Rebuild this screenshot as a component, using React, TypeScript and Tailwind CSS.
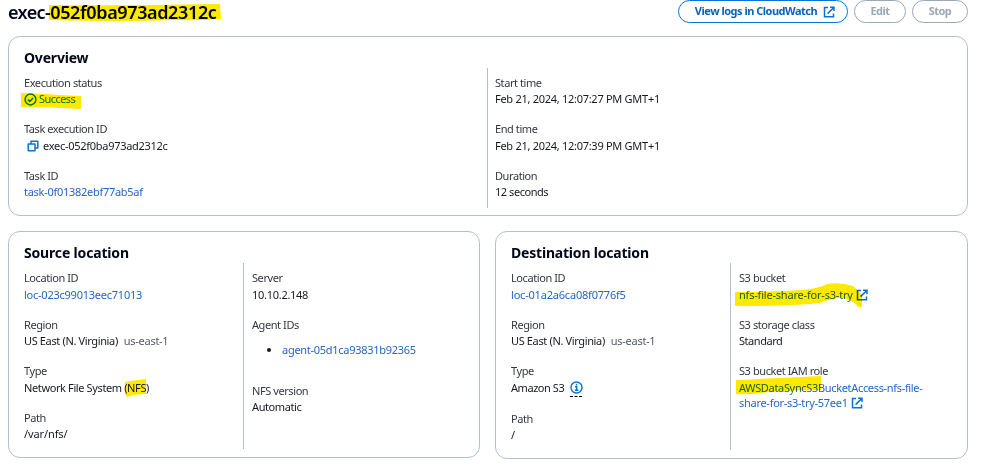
import type { ReactNode } from "react";

function ExternalIcon({ className = "" }: { className?: string }) {
  return (
    <svg viewBox="0 0 12 12" className={`h-3 w-3 shrink-0 ${className}`} fill="none" stroke="#0972d3" strokeWidth="1.5">
      <path d="M5 1.5H1.5V10.8H10.5V7.5" />
      <path d="M7 1.2H11V5M11 1.2L4.6 7.6" />
    </svg>
  );
}

function CopyIcon() {
  return (
    <svg viewBox="0 0 12 12" className="h-3 w-3 shrink-0" fill="none" stroke="#0972d3" strokeWidth="1.5" strokeLinejoin="round">
      <path d="M1.2 4H8V10.8H1.2Z" />
      <path d="M4 4V1.2H10.8V8H8" />
    </svg>
  );
}

function SuccessIcon() {
  return (
    <svg viewBox="0 0 13 13" className="h-[13px] w-[13px] shrink-0" fill="none" stroke="#037f0c" strokeWidth="1.5">
      <circle cx="6.5" cy="6.5" r="5.4" />
      <path d="M3.8 6.6L5.8 8.4L9 4.9" />
    </svg>
  );
}

function InfoIcon() {
  return (
    <svg viewBox="0 0 13 13" className="h-[13px] w-[13px] shrink-0" fill="none" stroke="#0972d3" strokeWidth="1.4">
      <circle cx="6.5" cy="6.5" r="5.5" />
      <path d="M5 5.8H6.7V9.2M4.8 9.2H8.4" />
      <path d="M5.8 3.8H7.3" strokeWidth="1.5" />
    </svg>
  );
}

function Field({ label, children, className = "" }: { label: string; children: ReactNode; className?: string }) {
  return (
    <div className={`leading-[16.5px] ${className}`}>
      <div className="tracking-[-0.42px] text-[#33383f]">{label}</div>
      <div className="flex items-center whitespace-nowrap">{children}</div>
    </div>
  );
}

function Mark({ d, className }: { d: string; className: string }) {
  return (
    <svg className={`pointer-events-none absolute overflow-visible mix-blend-multiply ${className}`} fill="#ffe900">
      <path d={d} />
    </svg>
  );
}

function Region() {
  return (
    <>
      <span className="tracking-[-0.36px]">US East (N. Virginia)</span>
      <span className="ml-1.5 text-[#545b66]">us-east-1</span>
    </>
  );
}

export default function App() {
  return (
    <div className="h-[472px] w-[987px] overflow-hidden bg-white pl-2 font-['Noto_Sans',sans-serif] text-[11px] tracking-[-0.28px] text-[#16191f]">
      <header className="flex h-9 w-[960px] items-start justify-between">
        <h1 className="relative text-[18px] leading-6 font-semibold tracking-[-0.37px] text-[#000716]">
          <span className="tracking-[-0.6px]">exec-</span>052f0ba973ad2312c
          <Mark className="top-0 left-10 h-6 w-44" d="M1 5Q60 6 172 4L173 19Q150 21 125 20Q70 22 1 20Z" />
        </h1>
        <div className="flex gap-1.5 font-bold tracking-[-0.5px]">
          <button className="flex h-[23px] w-[170px] items-center justify-center gap-1.5 rounded-full border border-[#0972d3] pl-1 text-[#0b61bd]">
            <span>View logs in CloudWatch</span>
            <ExternalIcon />
          </button>
          <button className="h-[23px] w-[52px] rounded-full border border-[#9ba7b6] text-[#9ba7b6]">Edit</button>
          <button className="h-[23px] w-14 rounded-full border border-[#9ba7b6] text-[#9ba7b6]">Stop</button>
        </div>
      </header>

      <section className="h-[180px] w-[960px] rounded-xl border border-[#b6bec9] px-[15px] pt-[11px]">
        <h2 className="h-5 text-sm leading-5 font-bold tracking-[-0.2px] text-[#000716]">Overview</h2>
        <div className="flex">
          <div className="flex w-[463px] flex-col gap-[13.5px] pt-[6.75px]">
            <Field label="Execution status">
              <span className="relative flex items-center gap-0.5 tracking-[-0.55px] text-[#037f0c]">
                <SuccessIcon />
                Success
                <Mark className="-top-px left-0 h-5 w-16" d="M-3 3Q25 4 35 5L57 6V19Q30 17 -3 17Z" />
              </span>
            </Field>
            <Field label="Task execution ID">
              <span className="flex items-center gap-1 pl-[3px]">
                <CopyIcon />
                exec-052f0ba973ad2312c
              </span>
            </Field>
            <Field label="Task ID">
              <a className="text-[#2466c4]">task-0f01382ebf77ab5af</a>
            </Field>
          </div>
          <div className="flex h-[140px] flex-col gap-[13.5px] border-l border-[#b6bec9] pt-[6.75px] pl-[7px]">
            <Field label="Start time">Feb 21, 2024, 12:07:27 PM GMT+1</Field>
            <Field label="End time">Feb 21, 2024, 12:07:39 PM GMT+1</Field>
            <Field label="Duration">
              <span className="tracking-[-0.45px]">12 seconds</span>
            </Field>
          </div>
        </div>
      </section>

      <div className="mt-[15px] flex gap-[15px]">
        <section className="h-[227px] w-[472px] rounded-xl border border-[#b6bec9] px-[15px] pt-[11px]">
          <h2 className="h-5 text-sm leading-5 font-bold tracking-[-0.17px] text-[#000716]">Source location</h2>
          <div className="flex">
            <div className="flex w-[219px] flex-col gap-[13.5px] pt-[7px]">
              <Field label="Location ID">
                <a className="tracking-[-0.24px] text-[#2466c4]">loc-023c99013eec71013</a>
              </Field>
              <Field label="Region">
                <Region />
              </Field>
              <Field label="Type">
                <span className="relative tracking-[-0.38px]">
                  Network File System (NFS)
                  <Mark className="-top-px right-0 h-5 w-[25px]" d="M1 3Q12 1 22 0V15Q10 15 3 18L1 15Z" />
                </span>
              </Field>
              <Field label="Path">
                <span className="tracking-[-0.1px]">/var/nfs/</span>
              </Field>
            </div>
            <div className="flex h-[186px] flex-col border-l border-[#b6bec9] pt-[7px] pl-2">
              <Field label="Server">10.10.2.148</Field>
              <Field label="Agent IDs" className="mt-[13.5px]">
                <ul className="mt-[9px] list-disc pl-[30px]">
                  <li>
                    <a className="text-[#2466c4]">agent-05d1ca93831b92365</a>
                  </li>
                </ul>
              </Field>
              <Field label="NFS version" className="mt-6">
                <span className="tracking-[-0.4px]">Automatic</span>
              </Field>
            </div>
          </div>
        </section>

        <section className="h-[228px] w-[473px] rounded-xl border border-[#b6bec9] px-[15px] pt-[11px]">
          <h2 className="h-5 text-sm leading-5 font-bold tracking-[-0.2px] text-[#000716]">Destination location</h2>
          <div className="flex">
            <div className="flex w-[219px] flex-col gap-[13.5px] pt-[7px]">
              <Field label="Location ID">
                <a className="tracking-[-0.2px] text-[#2466c4]">loc-01a2a6ca08f0776f5</a>
              </Field>
              <Field label="Region">
                <Region />
              </Field>
              <Field label="Type">
                <span className="tracking-[-0.45px]">Amazon S3</span>
                <span className="relative ml-1.5">
                  <InfoIcon />
                  <span className="absolute -bottom-[3px] left-0 w-3 border-b border-dashed border-black" />
                </span>
              </Field>
              <Field label="Path" className="pt-px">
                /
              </Field>
            </div>
            <div className="flex h-[187px] flex-col gap-[13.5px] border-l border-[#b6bec9] pt-[7px] pl-2">
              <Field label="S3 bucket">
                <a className="relative flex items-center gap-[3px] tracking-[-0.2px] text-[#2466c4]">
                  nfs-file-share-for-s3-try
                  <ExternalIcon />
                  <Mark
                    className="top-0 left-0 h-5 w-32"
                    d="M-4 5Q30 5 65 3Q80 1 88 -3Q103 -5 114 -1Q120 4 123 8V20Q119 21 117 17Q108 10 99 11Q88 13 80 16Q60 19 -4 19Z"
                  />
                </a>
              </Field>
              <Field label="S3 storage class">
                <span className="tracking-[-0.45px]">Standard</span>
              </Field>
              <Field label="S3 bucket IAM role">
                <a className="relative leading-[15px] text-[#2466c4]">
                  <span className="tracking-[-0.33px]">AWSDataSyncS3BucketAccess-nfs-file-</span>
                  <span className="flex items-center gap-[3px]">
                    share-for-s3-try-57ee1
                    <ExternalIcon className="mt-px" />
                  </span>
                  <Mark className="top-0 left-0 h-5 w-24" d="M-3 0Q40 -2 82 -4V10Q50 10 30 12Q10 15 -3 14Z" />
                </a>
              </Field>
            </div>
          </div>
        </section>
      </div>
    </div>
  );
}
